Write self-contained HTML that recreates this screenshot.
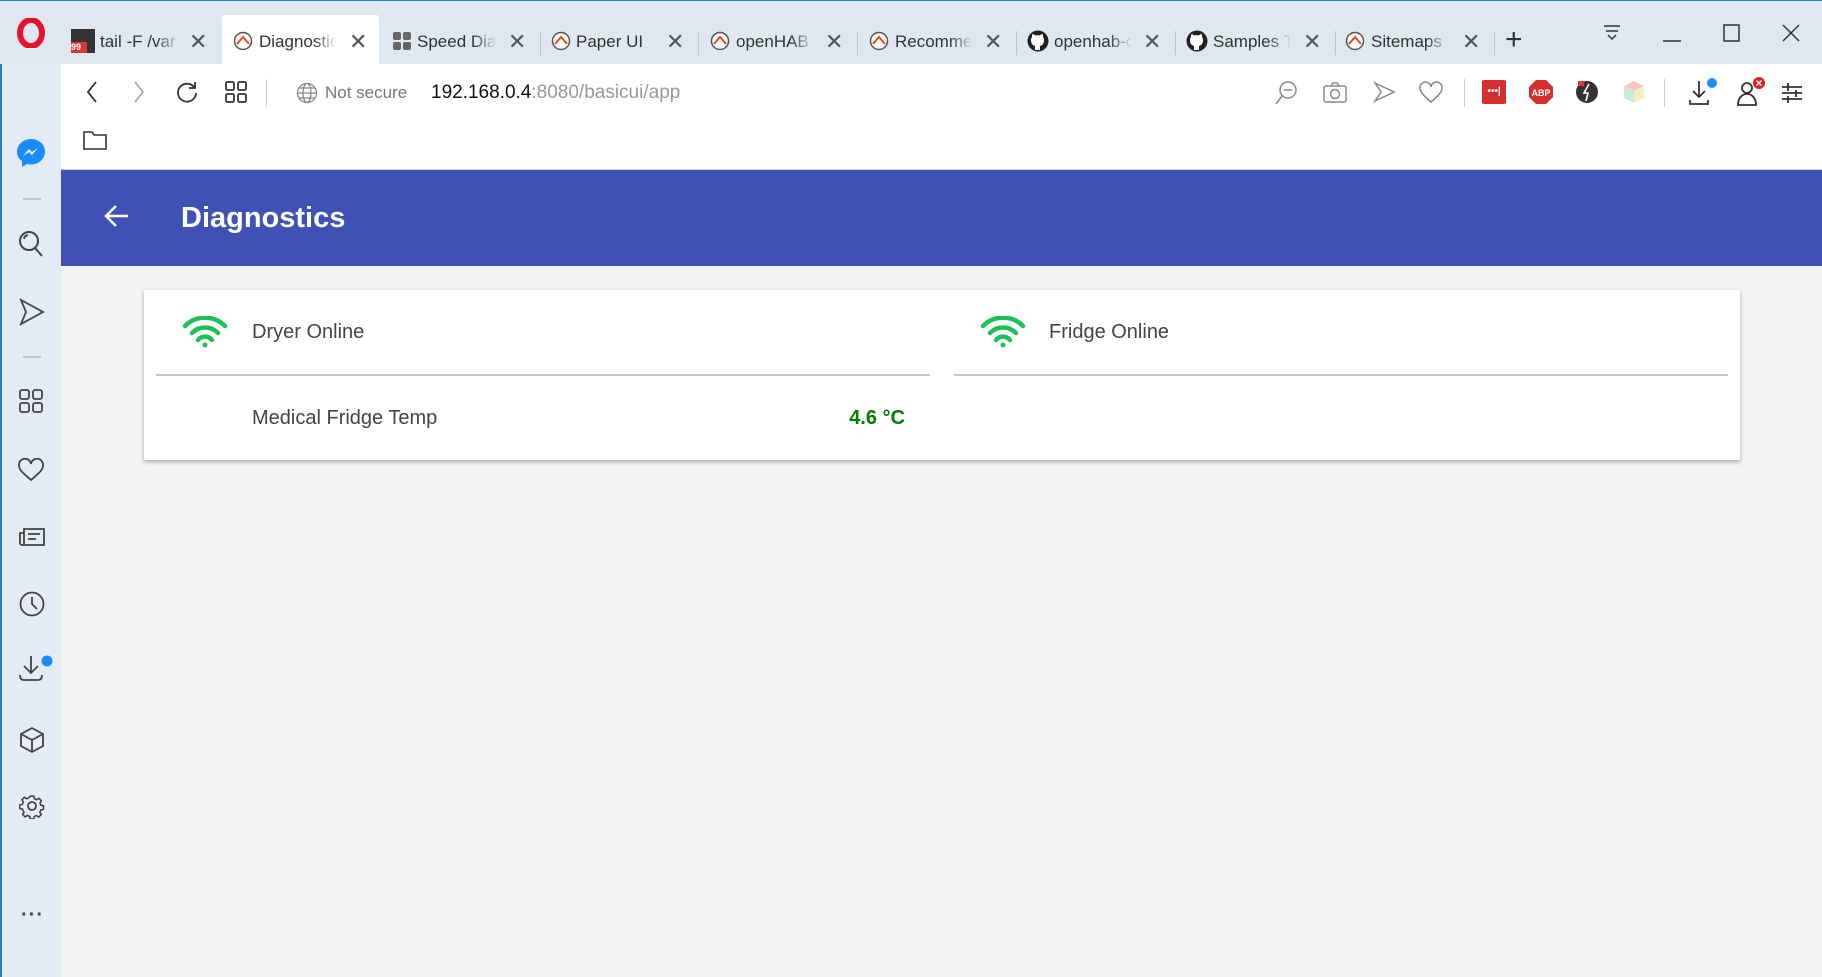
<!DOCTYPE html>
<html><head><meta charset="utf-8"><style>
*{margin:0;padding:0;box-sizing:border-box}
body{width:1822px;height:977px;overflow:hidden;background:#f4f4f4;font-family:"Liberation Sans",Arial,sans-serif;position:relative}
.abs{position:absolute}
#tabs{left:0;top:0;width:1822px;height:64px;background:#dfe7f0;border-top:1px solid #1a7fd9}
#side{left:0;top:64px;width:61px;height:913px;background:#e3ebf4;border-left:2px solid #1a7fd9;overflow:hidden}
#addr{left:61px;top:64px;width:1761px;height:106px;background:#fff;border-bottom:1px solid #d0d0d0}
.tab{position:absolute;top:27px;font-size:17px;color:#333;white-space:nowrap}
.tab .t{position:absolute;top:4px;width:90px;overflow:hidden;-webkit-mask-image:linear-gradient(90deg,#000 70%,transparent);}
.x{position:absolute;top:28px;font-size:22px;color:#555;font-weight:300}
.sep{position:absolute;top:30px;width:1px;height:24px;background:#bfc7d0}
.ico{position:absolute}
#hdr{left:61px;top:170px;width:1761px;height:96px;background:#3f51b5}
#card{left:144px;top:290px;width:1596px;height:170px;background:#fff;box-shadow:0 2px 4px rgba(0,0,0,.3)}
.lbl{position:absolute;font-size:20px;color:#444}
</style></head><body>
<div id="tabs" class="abs">
 <svg class="ico" style="left:17px;top:17px" width="28" height="30"><ellipse cx="14" cy="15" rx="11" ry="13" fill="none" stroke="#e8132b" stroke-width="6"/></svg>
 <div class="abs" style="left:71px;top:28px;width:24px;height:24px;background:#333"><div style="position:absolute;left:0;bottom:0;width:16px;height:11px;background:#d33;color:#fff;font-size:9px;font-weight:bold">99</div></div>
 <div class="tab" style="left:100px"><span class="t" style="width:80px">tail -F /var</span></div>
 <div class="x" style="left:189px">✕</div>
 <div class="abs" style="left:222px;top:14px;width:157px;height:50px;background:#fff;border-radius:3px 3px 0 0"></div>
 <svg class="ico" style="left:233px;top:30px" width="20" height="20"><circle cx="10" cy="10" r="8.5" fill="#fff" stroke="#555" stroke-width="1.5"/><path d="M4 13 L10 6 L16 13" fill="none" stroke="#e64a19" stroke-width="2"/></svg>
 <div class="tab" style="left:259px"><span class="t" style="width:78px">Diagnostics</span></div>
 <div class="x" style="left:349px">✕</div>
 <svg class="ico" style="left:393px;top:31px" width="18" height="18"><rect x="0" y="0" width="8" height="8" rx="2" fill="#666"/><rect x="10" y="0" width="8" height="8" rx="2" fill="#666"/><rect x="0" y="10" width="8" height="8" rx="2" fill="#666"/><rect x="10" y="10" width="8" height="8" rx="2" fill="#666"/></svg>
 <div class="tab" style="left:417px"><span class="t" style="width:80px">Speed Dial</span></div>
 <div class="x" style="left:508px">✕</div><div class="sep" style="left:540px"></div>
 <svg class="ico" style="left:551px;top:30px" width="20" height="20"><circle cx="10" cy="10" r="8.5" fill="#fff" stroke="#555" stroke-width="1.5"/><path d="M4 13 L10 6 L16 13" fill="none" stroke="#e64a19" stroke-width="2"/></svg>
 <div class="tab" style="left:576px"><span class="t" style="width:80px;-webkit-mask-image:none">Paper UI</span></div>
 <div class="x" style="left:666px">✕</div><div class="sep" style="left:698px"></div>
 <svg class="ico" style="left:710px;top:30px" width="20" height="20"><circle cx="10" cy="10" r="8.5" fill="#fff" stroke="#555" stroke-width="1.5"/><path d="M4 13 L10 6 L16 13" fill="none" stroke="#e64a19" stroke-width="2"/></svg>
 <div class="tab" style="left:736px"><span class="t" style="width:78px">openHAB 2</span></div>
 <div class="x" style="left:825px">✕</div><div class="sep" style="left:857px"></div>
 <svg class="ico" style="left:869px;top:30px" width="20" height="20"><circle cx="10" cy="10" r="8.5" fill="#fff" stroke="#555" stroke-width="1.5"/><path d="M4 13 L10 6 L16 13" fill="none" stroke="#e64a19" stroke-width="2"/></svg>
 <div class="tab" style="left:895px"><span class="t" style="width:78px">Recommended</span></div>
 <div class="x" style="left:984px">✕</div><div class="sep" style="left:1016px"></div>
 <svg class="ico" style="left:1027px;top:29px" width="22" height="22"><circle cx="11" cy="11" r="10.5" fill="#222"/><path d="M8 20 v-4 c-3 -1 -4 -3 -4 -6 c0-2 1-3 1-3 c0-1 0-2 .5-3 c1 0 2 1 3 1.5 c1-.3 3-.3 4 0 c1-.5 2-1.5 3-1.5 c.5 1 .5 2 .5 3 c0 0 1 1 1 3 c0 3-1 5-4 6 v4z" fill="#fff"/></svg>
 <div class="tab" style="left:1054px"><span class="t" style="width:78px">openhab-docs</span></div>
 <div class="x" style="left:1143px">✕</div><div class="sep" style="left:1175px"></div>
 <svg class="ico" style="left:1186px;top:29px" width="22" height="22"><circle cx="11" cy="11" r="10.5" fill="#222"/><path d="M8 20 v-4 c-3 -1 -4 -3 -4 -6 c0-2 1-3 1-3 c0-1 0-2 .5-3 c1 0 2 1 3 1.5 c1-.3 3-.3 4 0 c1-.5 2-1.5 3-1.5 c.5 1 .5 2 .5 3 c0 0 1 1 1 3 c0 3-1 5-4 6 v4z" fill="#fff"/></svg>
 <div class="tab" style="left:1213px"><span class="t" style="width:78px">Samples Tricks</span></div>
 <div class="x" style="left:1303px">✕</div><div class="sep" style="left:1335px"></div>
 <svg class="ico" style="left:1345px;top:30px" width="20" height="20"><circle cx="10" cy="10" r="8.5" fill="#fff" stroke="#555" stroke-width="1.5"/><path d="M4 13 L10 6 L16 13" fill="none" stroke="#e64a19" stroke-width="2"/></svg>
 <div class="tab" style="left:1371px"><span class="t" style="width:78px">Sitemaps</span></div>
 <div class="x" style="left:1462px">✕</div><div class="sep" style="left:1494px"></div>
 <div class="abs" style="left:1505px;top:22px;font-size:30px;color:#333;font-weight:300">+</div>
 <svg class="ico" style="left:1602px;top:22px" width="20" height="20" stroke="#333" stroke-width="1.5" fill="none"><path d="M2 3h16M4 8h12M6 12l4 4 4-4"/></svg>
 <svg class="ico" style="left:1662px;top:30px" width="20" height="12"><path d="M1 10h18" stroke="#333" stroke-width="1.5"/></svg>
 <svg class="ico" style="left:1722px;top:22px" width="20" height="20"><rect x="2" y="2" width="15" height="16" fill="none" stroke="#333" stroke-width="1.5"/></svg>
 <svg class="ico" style="left:1781px;top:22px" width="20" height="20"><path d="M2 2l16 16M18 2L2 18" stroke="#333" stroke-width="1.5"/></svg>
</div>
<div id="addr" class="abs">
 <svg class="ico" style="left:23px;top:16px" width="16" height="24" stroke="#333" stroke-width="1.8" fill="none"><path d="M12 2L4 12l8 10"/></svg>
 <svg class="ico" style="left:70px;top:16px" width="16" height="24" stroke="#aaa" stroke-width="1.8" fill="none"><path d="M4 2l8 10-8 10"/></svg>
 <svg class="ico" style="left:114px;top:16px" width="24" height="24" stroke="#333" stroke-width="1.8" fill="none"><path d="M19 7A9 9 0 1 0 21 13"/><path d="M20 2v6h-6"/></svg>
 <svg class="ico" style="left:164px;top:17px" width="22" height="22" stroke="#333" stroke-width="1.8" fill="none"><rect x="1" y="1" width="8" height="8" rx="1.5"/><rect x="13" y="1" width="8" height="8" rx="1.5"/><rect x="1" y="13" width="8" height="8" rx="1.5"/><rect x="13" y="13" width="8" height="8" rx="1.5"/></svg>
 <div class="abs" style="left:205px;top:15px;width:1px;height:28px;background:#ccc"></div>
 <svg class="ico" style="left:235px;top:18px" width="22" height="22" stroke="#888" stroke-width="1.3" fill="none"><circle cx="11" cy="11" r="9.5"/><ellipse cx="11" cy="11" rx="4" ry="9.5"/><path d="M1.5 11h19M3 6h16M3 16h16"/></svg>
 <div class="abs" style="left:264px;top:19px;font-size:17px;color:#777">Not secure</div>
 <div class="abs" style="left:370px;top:18px;font-size:19px;color:#111">192.168.0.4<span style="color:#999">:8080/basicui/app</span></div>
 <svg class="ico" style="left:1213px;top:16px" width="24" height="26" stroke="#888" stroke-width="1.5" fill="none"><circle cx="14" cy="10" r="8"/><path d="M8 16l-6 8M10 10h8"/></svg>
 <svg class="ico" style="left:1262px;top:17px" width="24" height="22" stroke="#888" stroke-width="1.5" fill="none"><rect x="1" y="5" width="22" height="16" rx="2"/><circle cx="12" cy="13" r="4.5"/><path d="M8 5l2-3h4l2 3"/></svg>
 <svg class="ico" style="left:1312px;top:17px" width="22" height="22" stroke="#888" stroke-width="1.5" fill="none"><path d="M2 2l19 9-19 9 6-9z"/></svg>
 <svg class="ico" style="left:1358px;top:17px" width="24" height="22" stroke="#888" stroke-width="1.5" fill="none"><path d="M12 21C4 14 1 11 1 7a5 5 0 0 1 11-1 5 5 0 0 1 11 1c0 4-3 7-11 14z"/></svg>
 <div class="abs" style="left:1403px;top:15px;width:1px;height:28px;background:#ccc"></div>
 <div class="abs" style="left:1421px;top:16px;width:24px;height:24px;background:#d32f2f;border-radius:2px;color:#fff;font-size:10px;text-align:center;line-height:24px;font-weight:bold">•••|</div>
 <svg class="ico" style="left:1468px;top:16px" width="24" height="24"><polygon points="7,0 17,0 24,7 24,17 17,24 7,24 0,17 0,7" fill="#d32f2f"/><text x="12" y="16" font-size="9" font-weight="bold" fill="#fff" text-anchor="middle" font-family="Liberation Sans">ABP</text></svg>
 <svg class="ico" style="left:1514px;top:16px" width="24" height="24"><circle cx="12" cy="12" r="11" fill="#333"/><path d="M14 4l-5 9h4l-2 8" stroke="#fff" stroke-width="1.6" fill="none"/><rect x="3" y="1" width="6" height="5" fill="#e33"/></svg>
 <svg class="ico" style="left:1562px;top:16px" width="22" height="24"><polygon points="11,1 21,6 11,11 1,6" fill="#f8c4c4"/><polygon points="1,6 11,11 11,23 1,18" fill="#c9ecd9"/><polygon points="21,6 11,11 11,23 21,18" fill="#f8ecc4"/></svg>
 <div class="abs" style="left:1603px;top:15px;width:1px;height:28px;background:#ccc"></div>
 <svg class="ico" style="left:1627px;top:14px" width="30" height="30" stroke="#333" stroke-width="1.8" fill="none"><path d="M11 3v16M5 13l6 6 6-6M2 22v4h18v-4"/><circle cx="24" cy="5" r="5" fill="#1a8cff" stroke="none"/></svg>
 <svg class="ico" style="left:1674px;top:12px" width="32" height="32" stroke="#333" stroke-width="1.8" fill="none"><circle cx="12" cy="12" r="5"/><path d="M3 29c0-7 4-11 9-11s9 4 9 11z"/><circle cx="24" cy="7" r="6" fill="#e02020" stroke="none"/><path d="M21.5 4.5l5 5M26.5 4.5l-5 5" stroke="#fff" stroke-width="1.4"/></svg>
 <svg class="ico" style="left:1720px;top:17px" width="22" height="22" stroke="#333" stroke-width="1.8" fill="none"><path d="M1 6h20M1 12h20M1 18h20M7 2v8M15 9v7M7 15v7"/></svg>
 <svg class="ico" style="left:22px;top:66px" width="24" height="20" stroke="#333" stroke-width="1.6" fill="none"><path d="M1 2h8l2 3h12v14H1z"/></svg>
</div>
<div id="side" class="abs">
 <svg class="ico" style="left:13px;top:73px" width="32" height="32"><path d="M16 2C8 2 2 8 2 15c0 4 2 7 5 9v6l5-3c1 .3 3 .5 4 .5 8 0 14-6 14-13S24 2 16 2z" fill="#1a8cff"/><path d="M8 19l6-7 3 3 6-4-6 7-3-3z" fill="#fff"/></svg>
 <div class="abs" style="left:21px;top:134px;width:18px;height:2px;background:#c0c7d0"></div>
 <svg class="ico" style="left:16px;top:166px" width="28" height="30" stroke="#444" stroke-width="2" fill="none"><circle cx="11" cy="11" r="9"/><path d="M17 18l7 8M6 9a5 5 0 0 1 4-4"/></svg>
 <svg class="ico" style="left:17px;top:234px" width="26" height="28" stroke="#444" stroke-width="1.8" fill="none"><path d="M2 2l22 12-22 12 5-12z"/></svg>
 <div class="abs" style="left:21px;top:292px;width:18px;height:2px;background:#c0c7d0"></div>
 <svg class="ico" style="left:17px;top:325px" width="24" height="24" stroke="#444" stroke-width="1.8" fill="none"><rect x="1" y="1" width="9" height="9" rx="2"/><rect x="14" y="1" width="9" height="9" rx="2"/><rect x="1" y="14" width="9" height="9" rx="2"/><rect x="14" y="14" width="9" height="9" rx="2"/></svg>
 <svg class="ico" style="left:16px;top:394px" width="26" height="24" stroke="#444" stroke-width="1.8" fill="none"><path d="M13 22C5 15 1 12 1 7.5a5.5 5.5 0 0 1 12-1.5 5.5 5.5 0 0 1 12 1.5c0 4.5-4 7.5-12 14.5z"/></svg>
 <svg class="ico" style="left:17px;top:463px" width="26" height="20" stroke="#444" stroke-width="1.8" fill="none"><path d="M5 2h20v16H3a2 2 0 0 1-2-2V6h4zM5 6v12M9 7h12M9 12h8"/></svg>
 <svg class="ico" style="left:17px;top:527px" width="26" height="26" stroke="#444" stroke-width="1.8" fill="none"><circle cx="13" cy="13" r="11.5"/><path d="M13 6v7l5 5"/></svg>
 <svg class="ico" style="left:16px;top:590px" width="36" height="30" stroke="#444" stroke-width="1.8" fill="none"><path d="M13 2v16M6 12l7 7 7-7M2 21c0 4 2 5 4 5h14c2 0 4-1 4-5"/><circle cx="29" cy="7" r="5.5" fill="#1a8cff" stroke="none"/></svg>
 <svg class="ico" style="left:17px;top:662px" width="26" height="28" stroke="#444" stroke-width="1.8" fill="none"><path d="M13 2l11 6v12l-11 6-11-6V8zM2 8l11 6 11-6M13 14v12"/></svg>
 <svg class="ico" style="left:17px;top:729px" width="26" height="26" viewBox="0 0 26 26" stroke="#444" stroke-width="1.8" fill="none"><circle cx="13" cy="13" r="4"/><path d="M11 2h4l.7 3 2.6 1.1 2.6-1.6 2.8 2.8-1.6 2.6L23 12.3l3 .7v4l-3 .7-1.1 2.6 1.6 2.6-2.8 2.8-2.6-1.6-2.6 1.1L15 28h-4l-.7-3-2.6-1.1-2.6 1.6-2.8-2.8 1.6-2.6L2 16.7-1 16v-4l3-.7 1.1-2.6-1.6-2.6 2.8-2.8 2.6 1.6 2.6-1.1z" transform="translate(1.6 1.4) scale(0.88)"/></svg>
 <div class="abs" style="left:19px;top:840px;font-size:20px;color:#444;letter-spacing:1px;font-weight:bold">···</div>
</div>
<div id="hdr" class="abs">
 <svg class="ico" style="left:43px;top:34px" width="26" height="24" stroke="#fff" stroke-width="2.6" fill="none"><path d="M24 12H3M12 2L2 12l10 10"/></svg>
 <div class="abs" style="left:120px;top:32px;font-size:29px;font-weight:bold;color:#fff">Diagnostics</div>
</div>
<div id="card" class="abs">
 <svg class="ico" style="left:38px;top:26px" width="46" height="32" fill="none" stroke="#1dbf57" stroke-width="4.5" stroke-linecap="round"><path d="M3 10a28 28 0 0 1 40 0M10 17a18 18 0 0 1 26 0M16 24a9 9 0 0 1 14 0"/><circle cx="23" cy="29" r="2.5" fill="#1dbf57" stroke="none"/></svg>
 <div class="lbl" style="left:108px;top:31px">Dryer Online</div>
 <svg class="ico" style="left:836px;top:26px" width="46" height="32" fill="none" stroke="#1dbf57" stroke-width="4.5" stroke-linecap="round"><path d="M3 10a28 28 0 0 1 40 0M10 17a18 18 0 0 1 26 0M16 24a9 9 0 0 1 14 0"/><circle cx="23" cy="29" r="2.5" fill="#1dbf57" stroke="none"/></svg>
 <div class="lbl" style="left:905px;top:31px">Fridge Online</div>
 <div class="abs" style="left:12px;top:84px;width:774px;height:2px;background:#c8c8c8"></div>
 <div class="abs" style="left:810px;top:84px;width:774px;height:2px;background:#c8c8c8"></div>
 <div class="lbl" style="left:108px;top:117px">Medical Fridge Temp</div>
 <div class="abs" style="left:600px;width:161px;text-align:right;top:117px;font-size:20px;font-weight:bold;color:#008000">4.6 °C</div>
</div>
</body></html>
